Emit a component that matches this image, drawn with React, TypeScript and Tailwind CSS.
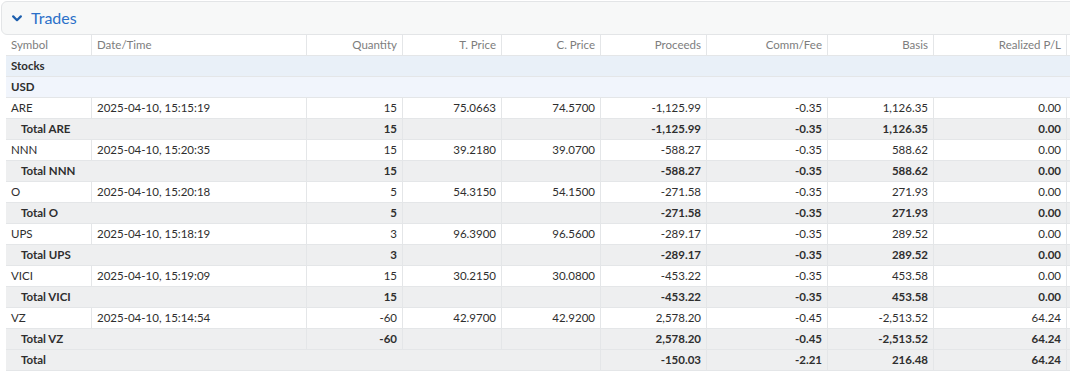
import React from "react";

type Trade = {
  sym: string;
  time: string;
  qty: string;
  tPrice: string;
  cPrice: string;
  proceeds: string;
  fee: string;
  basis: string;
  pl: string;
};

const TRADES: Trade[] = [
  { sym: "ARE", time: "2025-04-10, 15:15:19", qty: "15", tPrice: "75.0663", cPrice: "74.5700", proceeds: "-1,125.99", fee: "-0.35", basis: "1,126.35", pl: "0.00" },
  { sym: "NNN", time: "2025-04-10, 15:20:35", qty: "15", tPrice: "39.2180", cPrice: "39.0700", proceeds: "-588.27", fee: "-0.35", basis: "588.62", pl: "0.00" },
  { sym: "O", time: "2025-04-10, 15:20:18", qty: "5", tPrice: "54.3150", cPrice: "54.1500", proceeds: "-271.58", fee: "-0.35", basis: "271.93", pl: "0.00" },
  { sym: "UPS", time: "2025-04-10, 15:18:19", qty: "3", tPrice: "96.3900", cPrice: "96.5600", proceeds: "-289.17", fee: "-0.35", basis: "289.52", pl: "0.00" },
  { sym: "VICI", time: "2025-04-10, 15:19:09", qty: "15", tPrice: "30.2150", cPrice: "30.0800", proceeds: "-453.22", fee: "-0.35", basis: "453.58", pl: "0.00" },
  { sym: "VZ", time: "2025-04-10, 15:14:54", qty: "-60", tPrice: "42.9700", cPrice: "42.9200", proceeds: "2,578.20", fee: "-0.45", basis: "-2,513.52", pl: "64.24" },
];

// widths include the 1px right border of each cell
const COLS = [
  { label: "Symbol", w: "w-[86px]", left: true },
  { label: "Date/Time", w: "w-[215px]", left: true },
  { label: "Quantity", w: "w-[96px]" },
  { label: "T. Price", w: "w-[99px]" },
  { label: "C. Price", w: "w-[99px]" },
  { label: "Proceeds", w: "w-[106px]" },
  { label: "Comm/Fee", w: "w-[121px]" },
  { label: "Basis", w: "w-[106px]" },
  { label: "Realized P/L", w: "w-[133px]" },
];

const cell = "h-[21px] border-b border-r border-[#e4e6e8] px-[5px] py-0 align-middle whitespace-nowrap";
const num = `${cell} text-right`;

function TradeRow({ t }: { t: Trade }) {
  return (
    <tr className="bg-white">
      <td className={cell}>{t.sym}</td>
      <td className={cell}>{t.time}</td>
      <td className={num}>{t.qty}</td>
      <td className={num}>{t.tPrice}</td>
      <td className={num}>{t.cPrice}</td>
      <td className={num}>{t.proceeds}</td>
      <td className={num}>{t.fee}</td>
      <td className={num}>{t.basis}</td>
      <td className={num}>{t.pl}</td>
      <td className={cell} />
    </tr>
  );
}

function TotalRow({ t }: { t: Trade }) {
  return (
    <tr className="bg-[#eeeff0] font-bold">
      <td colSpan={2} className={`${cell} pl-[15px]`}>Total {t.sym}</td>
      <td className={num}>{t.qty}</td>
      <td className={num} />
      <td className={num} />
      <td className={num}>{t.proceeds}</td>
      <td className={num}>{t.fee}</td>
      <td className={num}>{t.basis}</td>
      <td className={num}>{t.pl}</td>
      <td className={cell} />
    </tr>
  );
}

export default function App() {
  return (
    <div className="h-[373px] w-[1070px] overflow-hidden bg-white pl-px pt-px font-['Lato',sans-serif] text-[11.5px] text-[#2e2e2e]">
      <div className="flex h-[34px] w-[1200px] items-center gap-[9px] rounded-md border border-[#e3e5e7] bg-[#f7f8f8] pl-[10px]">
        <svg width="10" height="7" viewBox="0 0 10 7" fill="none" className="mt-[1px]">
          <path d="M1.2 1.4 L5 5.2 L8.8 1.4" stroke="#1d5fae" strokeWidth="2.2" strokeLinecap="round" strokeLinejoin="round" />
        </svg>
        <span className="text-[16px] leading-none text-[#2b70c9]">Trades</span>
      </div>
      <table className="ml-[5px] w-[1211px] table-fixed border-separate border-spacing-0">
        <thead>
          <tr className="bg-white text-[#7d7d7d]">
            {COLS.map((c) => (
              <th key={c.label} className={`${cell} ${c.w} font-normal ${c.left ? "text-left" : "text-right"}`}>
                {c.label}
              </th>
            ))}
            <th className={`${cell} w-[150px]`} />
          </tr>
        </thead>
        <tbody>
          <tr className="bg-[#e9f0f8] font-bold">
            <td colSpan={10} className={`${cell} border-r-0`}>Stocks</td>
          </tr>
          <tr className="bg-[#f1f5fc] font-bold">
            <td colSpan={10} className={`${cell} border-r-0`}>USD</td>
          </tr>
          {TRADES.map((t) => (
            <React.Fragment key={t.sym}>
              <TradeRow t={t} />
              <TotalRow t={t} />
            </React.Fragment>
          ))}
          <tr className="bg-[#eeeff0] font-bold">
            <td colSpan={5} className={`${cell} pl-[15px]`}>Total</td>
            <td className={num}>-150.03</td>
            <td className={num}>-2.21</td>
            <td className={num}>216.48</td>
            <td className={num}>64.24</td>
            <td className={cell} />
          </tr>
        </tbody>
      </table>
    </div>
  );
}
